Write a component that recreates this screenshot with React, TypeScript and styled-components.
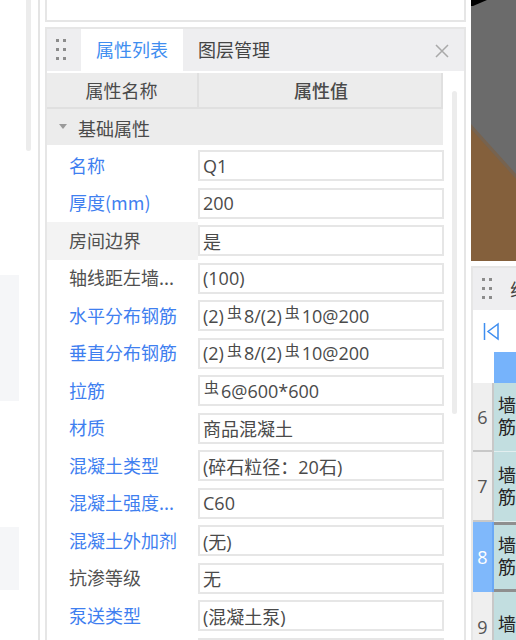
import React from "react";
import styled, { createGlobalStyle } from "styled-components";

const Global = createGlobalStyle`
  html, body { margin: 0; padding: 0; background: #fff; overflow: hidden; }
  #root { width: 516px; height: 640px; }
`;
const FONT = `"Noto Sans CJK SC", "Open Sans", sans-serif`;

const Page = styled.div`
  width: 516px; height: 640px; display: flex; overflow: hidden; background: #fff;
  font-family: ${FONT}; font-size: 18px; color: #444;
`;
const LeftRail = styled.div`
  width: 40px; box-sizing: border-box; flex: none; border-right: 2px solid #e4e4e4; display: flex; background: #fff;
`;
const RailBands = styled.div`
  width: 19px; display: flex; flex-direction: column; padding-top: 275px;
`;
const RailBand = styled.div<{ $h: number; $mb?: number }>`
  height: ${p => p.$h}px; margin-bottom: ${p => p.$mb ?? 0}px; background: #f5f6f8;
`;
const RailScroll = styled.div`
  width: 5px; height: 151px; margin-left: 7px; background: #ececec; border-radius: 0 0 3px 3px;
`;
const Middle = styled.div`
  width: 421px; margin-left: 5px; flex: none; display: flex; flex-direction: column; gap: 5px;
`;
const TopPanel = styled.div`
  height: 20px; flex: none; border: 2px solid #e6e6e6; border-top: 0; background: #fff;
`;
const PropPanel = styled.div`
  flex: 1; min-height: 0; border: 2px solid #e6e6e6; border-bottom: 0; display: flex; flex-direction: column;
  background: #fff;
`;
const TabBar = styled.div`
  height: 42px; flex: none; display: flex; align-items: stretch; background: #eeeef0;
  position: relative;
`;
const Grip = styled.svg`
  width: 10px; height: 22px; flex: none; margin: 10px 15px 0 9px;
`;
const Tab = styled.div<{ $active?: boolean }>`
  width: 102px; height: 42px; box-sizing: border-box; padding-bottom: 2px; display: flex; align-items: center; justify-content: center;
  font-size: 18px; color: ${p => (p.$active ? "#3f8ef0" : "#444")};
  background: ${p => (p.$active ? "#fff" : "transparent")};
`;
const CloseIcon = styled.svg`
  position: absolute; right: 15px; top: 15px; width: 14px; height: 14px;
`;
const Body = styled.div`
  flex: 1; min-height: 0; display: flex;
`;
const TableCol = styled.div`
  width: 397px; flex: none; display: flex; flex-direction: column;
`;
const HeadRow = styled.div`
  height: 34px; flex: none; display: flex; width: 396px;
  background: #ececec; border-bottom: 2px solid #e0e0e0; margin-top: 2px;
  box-shadow: inset -2px 0 0 #e0e0e0;
`;
const HeadCell = styled.div<{ $w: number; $bold?: boolean }>`
  width: ${p => p.$w}px; box-sizing: border-box; display: flex; align-items: center; justify-content: center;
  font-size: 18px; font-weight: ${p => (p.$bold ? 500 : 400)};
  color: #4a4a4a; padding-right: ${p => (p.$bold ? 0 : 1)}px;
  ${p => (p.$bold ? "" : "border-right: 2px solid #e0e0e0;")}
`;
const Section = styled.div`
  height: 36px; width: 396px; box-sizing: border-box; padding-top: 2px; flex: none; display: flex; align-items: center;
  background: #ececec; font-size: 18px; color: #4a4a4a;
`;
const Caret = styled.span`
  width: 0; height: 0; margin: 0 11px 4px 12px;
  border-left: 4px solid transparent; border-right: 4px solid transparent; border-top: 5px solid #9a9a9a;
`;
const Rows = styled.div`
  display: flex; flex-direction: column; padding-top: 2px;
`;
const Row = styled.div<{ $hl?: boolean }>`
  height: 37.5px; width: 397px; flex: none; display: flex; align-items: center;
  background: ${p => (p.$hl ? "linear-gradient(90deg, #f3f3f3 151px, #fff 151px)" : "#fff")};
`;
const Label = styled.div<{ $link?: boolean }>`
  width: 151px; flex: none; padding: 0 0 2px 22px; box-sizing: border-box; font-size: 18px; white-space: nowrap;
  color: ${p => (p.$link ? "#3f7ff0" : "#505050")};
`;
const Value = styled.div`
  width: 246px; height: 31px; flex: none; box-sizing: border-box; border: 2px solid #e6e6e6;
  background: #fff; display: flex; align-items: center; padding-left: 3px; font-size: 18px;
  font-family: "Open Sans", "Noto Sans CJK SC", sans-serif; color: #4a4a4a; white-space: nowrap;
`;
const Rebar = styled.span<{ $lead?: boolean }>`
  font-family: "Noto Sans CJK SC", sans-serif; font-size: 15px; position: relative; top: -4px;
  margin: 0 2px 0 ${p => (p.$lead ? 1 : 3)}px;
`;
const ScrollCol = styled.div`
  width: 5px; margin-left: 8px; margin-top: 20px; height: 323px; flex: none; background: #ececec; border-radius: 3px;
`;
const Right = styled.div`
  flex: 1; margin-left: 5px; display: flex; flex-direction: column; min-width: 0;
`;
const View3D = styled.svg`
  width: 45px; height: 261px; flex: none; display: block;
`;
const BottomPanel = styled.div`
  margin-top: 5px; flex: 1; border: 2px solid #e6e6e6; border-right: 0; border-bottom: 0; display: flex; flex-direction: column;
  overflow: hidden; min-height: 0;
`;
const PanelBar = styled.div`
  height: 42px; flex: none; display: flex; align-items: center; background: #eeeef0; overflow: hidden; font-size: 18px; white-space: nowrap;
  & > svg { margin-top: 0; margin-right: 18px; }
`;
const ToolRow = styled.div`
  height: 42px; flex: none; display: flex; align-items: center; padding-left: 10px; background: #fff;
`;
const GridHead = styled.div`
  height: 31px; flex: none; display: flex;
`;
const Corner = styled.div`
  width: 21px; flex: none; background: #fff;
`;
const HeadBlue = styled.div`
  flex: 1; background: #76b3fb;
`;
const GridRow = styled.div<{ $h: number }>`
  height: ${p => p.$h}px; flex: none; display: flex;
`;
const RowNo = styled.div<{ $sel?: boolean }>`
  width: 21px; box-sizing: border-box; flex: none; display: flex; align-items: center; justify-content: center; font-size: 18px;
  font-family: "Open Sans", sans-serif;
  background: ${p => (p.$sel ? "#7fb8fb" : "#efefef")}; color: ${p => (p.$sel ? "#fff" : "#555")};
  border-right: 2px solid ${p => (p.$sel ? "#6aa8f5" : "#c8c8c8")};
  border-bottom: ${p => (p.$sel ? "0" : "2px solid #c8c8c8")};
`;
const Cell = styled.div<{ $sel?: boolean; $pb?: number }>`
  flex: 1; background: #c2dee0; font-size: 18px; line-height: 22px; color: #222;
  padding: 0 0 ${p => p.$pb ?? 4}px 4px; display: flex; flex-direction: column; justify-content: center; overflow: hidden; white-space: nowrap;
  ${p => (p.$sel
    ? "border-top: 3px solid #8f8f8f; border-bottom: 3px solid #8f8f8f;"
    : "border-bottom: 1px solid #e2eeef;")}
`;

const rebar = <Rebar>虫</Rebar>;
const rows: { l: string; v: React.ReactNode; link?: boolean; hl?: boolean }[] = [
  { l: "名称", v: "Q1", link: true },
  { l: "厚度(mm)", v: "200", link: true },
  { l: "房间边界", v: "是", hl: true },
  { l: "轴线距左墙...", v: "(100)" },
  { l: "水平分布钢筋", v: <>(2){rebar}8/(2){rebar}10@200</>, link: true },
  { l: "垂直分布钢筋", v: <>(2){rebar}8/(2){rebar}10@200</>, link: true },
  { l: "拉筋", v: <><Rebar $lead>虫</Rebar>6@600*600</>, link: true },
  { l: "材质", v: "商品混凝土", link: true },
  { l: "混凝土类型", v: "(碎石粒径：20石)", link: true },
  { l: "混凝土强度...", v: "C60", link: true },
  { l: "混凝土外加剂", v: "(无)", link: true },
  { l: "抗渗等级", v: "无" },
  { l: "泵送类型", v: "(混凝土泵)", link: true },
  { l: "", v: "" },
];

const GripDots = () => (
  <Grip viewBox="0 0 10 22">
    {[0, 9, 18].map(y => [0, 7].map(x => <rect key={`${x}-${y}`} x={x} y={y} width="3" height="3" fill="#8c8c8c" />))}
  </Grip>
);

export default function App() {
  return (
    <Page>
      <Global />
      <LeftRail>
        <RailBands>
          <RailBand $h={126} $mb={126} />
          <RailBand $h={63} />
        </RailBands>
        <RailScroll />
      </LeftRail>
      <Middle>
        <TopPanel />
        <PropPanel>
          <TabBar>
            <GripDots />
            <Tab $active>属性列表</Tab>
            <Tab>图层管理</Tab>
            <CloseIcon viewBox="0 0 14 14">
              <path d="M1 1 L13 13 M13 1 L1 13" stroke="#a9a9a9" strokeWidth="1.5" fill="none" />
            </CloseIcon>
          </TabBar>
          <Body>
            <TableCol>
              <HeadRow>
                <HeadCell $w={152}>属性名称</HeadCell>
                <HeadCell $w={244} $bold>属性值</HeadCell>
              </HeadRow>
              <Section><Caret />基础属性</Section>
              <Rows>
                {rows.map((r, i) => (
                  <Row key={i} $hl={r.hl}>
                    <Label $link={r.link}>{r.l}</Label>
                    <Value>{r.v}</Value>
                  </Row>
                ))}
              </Rows>
            </TableCol>
            <ScrollCol />
          </Body>
        </PropPanel>
      </Middle>
      <Right>
        <View3D viewBox="0 0 45 261">
          <rect width="45" height="261" fill="#6b6b6b" />
          <path d="M0 0 H16 L2 6 H0 Z" fill="#000" />
          <path d="M0 124 L45 174 V180 L0 130 Z" fill="#77634f" />
          <path d="M0 129 L45 179 V261 H0 Z" fill="#84603c" />
        </View3D>
        <BottomPanel>
          <PanelBar>
            <GripDots />
            <span>线</span>
          </PanelBar>
          <ToolRow>
            <svg width="17" height="19" viewBox="0 0 17 19">
              <path d="M1.5 1 V18 M15 2 L5 9.5 L15 17 Z" stroke="#3f8ef0" strokeWidth="1.5" fill="none" />
            </svg>
          </ToolRow>
          <GridHead><Corner /><HeadBlue /></GridHead>
          <GridRow $h={69}><RowNo>6</RowNo><Cell>墙<br />筋</Cell></GridRow>
          <GridRow $h={70}><RowNo>7</RowNo><Cell>墙<br />筋</Cell></GridRow>
          <GridRow $h={70}><RowNo $sel>8</RowNo><Cell $sel>墙<br />筋</Cell></GridRow>
          <GridRow $h={72}><RowNo>9</RowNo><Cell $pb={10}>墙</Cell></GridRow>
        </BottomPanel>
      </Right>
    </Page>
  );
}
